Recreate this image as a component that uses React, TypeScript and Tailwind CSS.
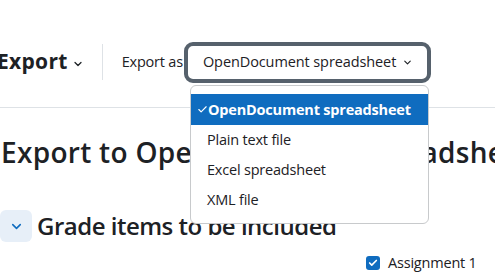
import { ChevronDown, Check } from "lucide-react";

const options = [
  "OpenDocument spreadsheet",
  "Plain text file",
  "Excel spreadsheet",
  "XML file",
];

export default function App() {
  return (
    <div className="relative w-[495px] h-[274px] overflow-hidden bg-white text-[#1d2125] font-['Open_Sans',sans-serif]">
      {/* Action bar */}
      <div className="flex items-center h-[108px] pt-[42px] pb-[25px] border-b border-[#dee2e6]">
        <div className="flex items-center -ml-[3px] pr-[18px]">
          <span className="text-[21px] font-bold tracking-[0.3px]">Export</span>
          <ChevronDown className="ml-[4px] mt-[3px] w-[12px] h-[12px]" strokeWidth={2.5} />
        </div>
        <div className="w-px h-[36px] bg-[#dee2e6]" />
        <span className="ml-[19px] text-[14.5px] tracking-[-0.2px]">Export as</span>
        <div className="ml-[1px] flex items-center justify-between w-[247px] h-[41px] rounded-[9px] border-[4px] border-[#56616c] bg-white pl-[15px] pr-[14px]">
          <span className="text-[14.5px] tracking-[-0.1px]">OpenDocument spreadsheet</span>
          <ChevronDown className="w-[11px] h-[11px]" strokeWidth={2.5} />
        </div>
      </div>

      {/* Page heading */}
      <h2 className="mt-[26px] ml-[1px] text-[28px] leading-[36px] font-semibold tracking-[0.3px] whitespace-nowrap">
        Export to OpenDocument spreadsheet
      </h2>

      <div className="mt-[38px] flex items-center">
        <button className="w-[32px] h-[32px] rounded-[6px] bg-[#e7eff8] flex items-center justify-center">
          <ChevronDown className="w-[15px] h-[15px] text-[#0f6cbf]" strokeWidth={2.5} />
        </button>
        <span className="ml-[5px] text-[24px] font-semibold tracking-[-0.5px] whitespace-nowrap">
          Grade items to be included
        </span>
      </div>

      <div className="mt-[8px] ml-[366px] flex items-center">
        <span className="w-[14px] h-[14px] rounded-[3px] bg-[#0f6cbf] flex items-center justify-center">
          <Check className="w-[10px] h-[10px] text-white" strokeWidth={4} />
        </span>
        <span className="ml-[8px] text-[14.5px] tracking-[-0.2px]">Assignment 1</span>
      </div>

      {/* Open select list */}
      <div className="absolute left-[190px] top-[85px] w-[239px] pt-[8px] pb-[8px] bg-white border border-[#c8cacc] rounded-[6px]">
        {options.map((o, i) =>
          i === 0 ? (
            <div
              key={o}
              className="h-[31px] flex items-center pl-[6px] bg-[#0f6cbf] text-white text-[14.5px] font-bold tracking-[-0.2px]"
            >
              <Check className="w-[11px] h-[11px]" strokeWidth={2.5} />
              {o}
            </div>
          ) : (
            <div key={o} className="h-[30px] flex items-center pl-[16px] text-[14.5px] tracking-[-0.2px]">
              {o}
            </div>
          )
        )}
      </div>
    </div>
  );
}
